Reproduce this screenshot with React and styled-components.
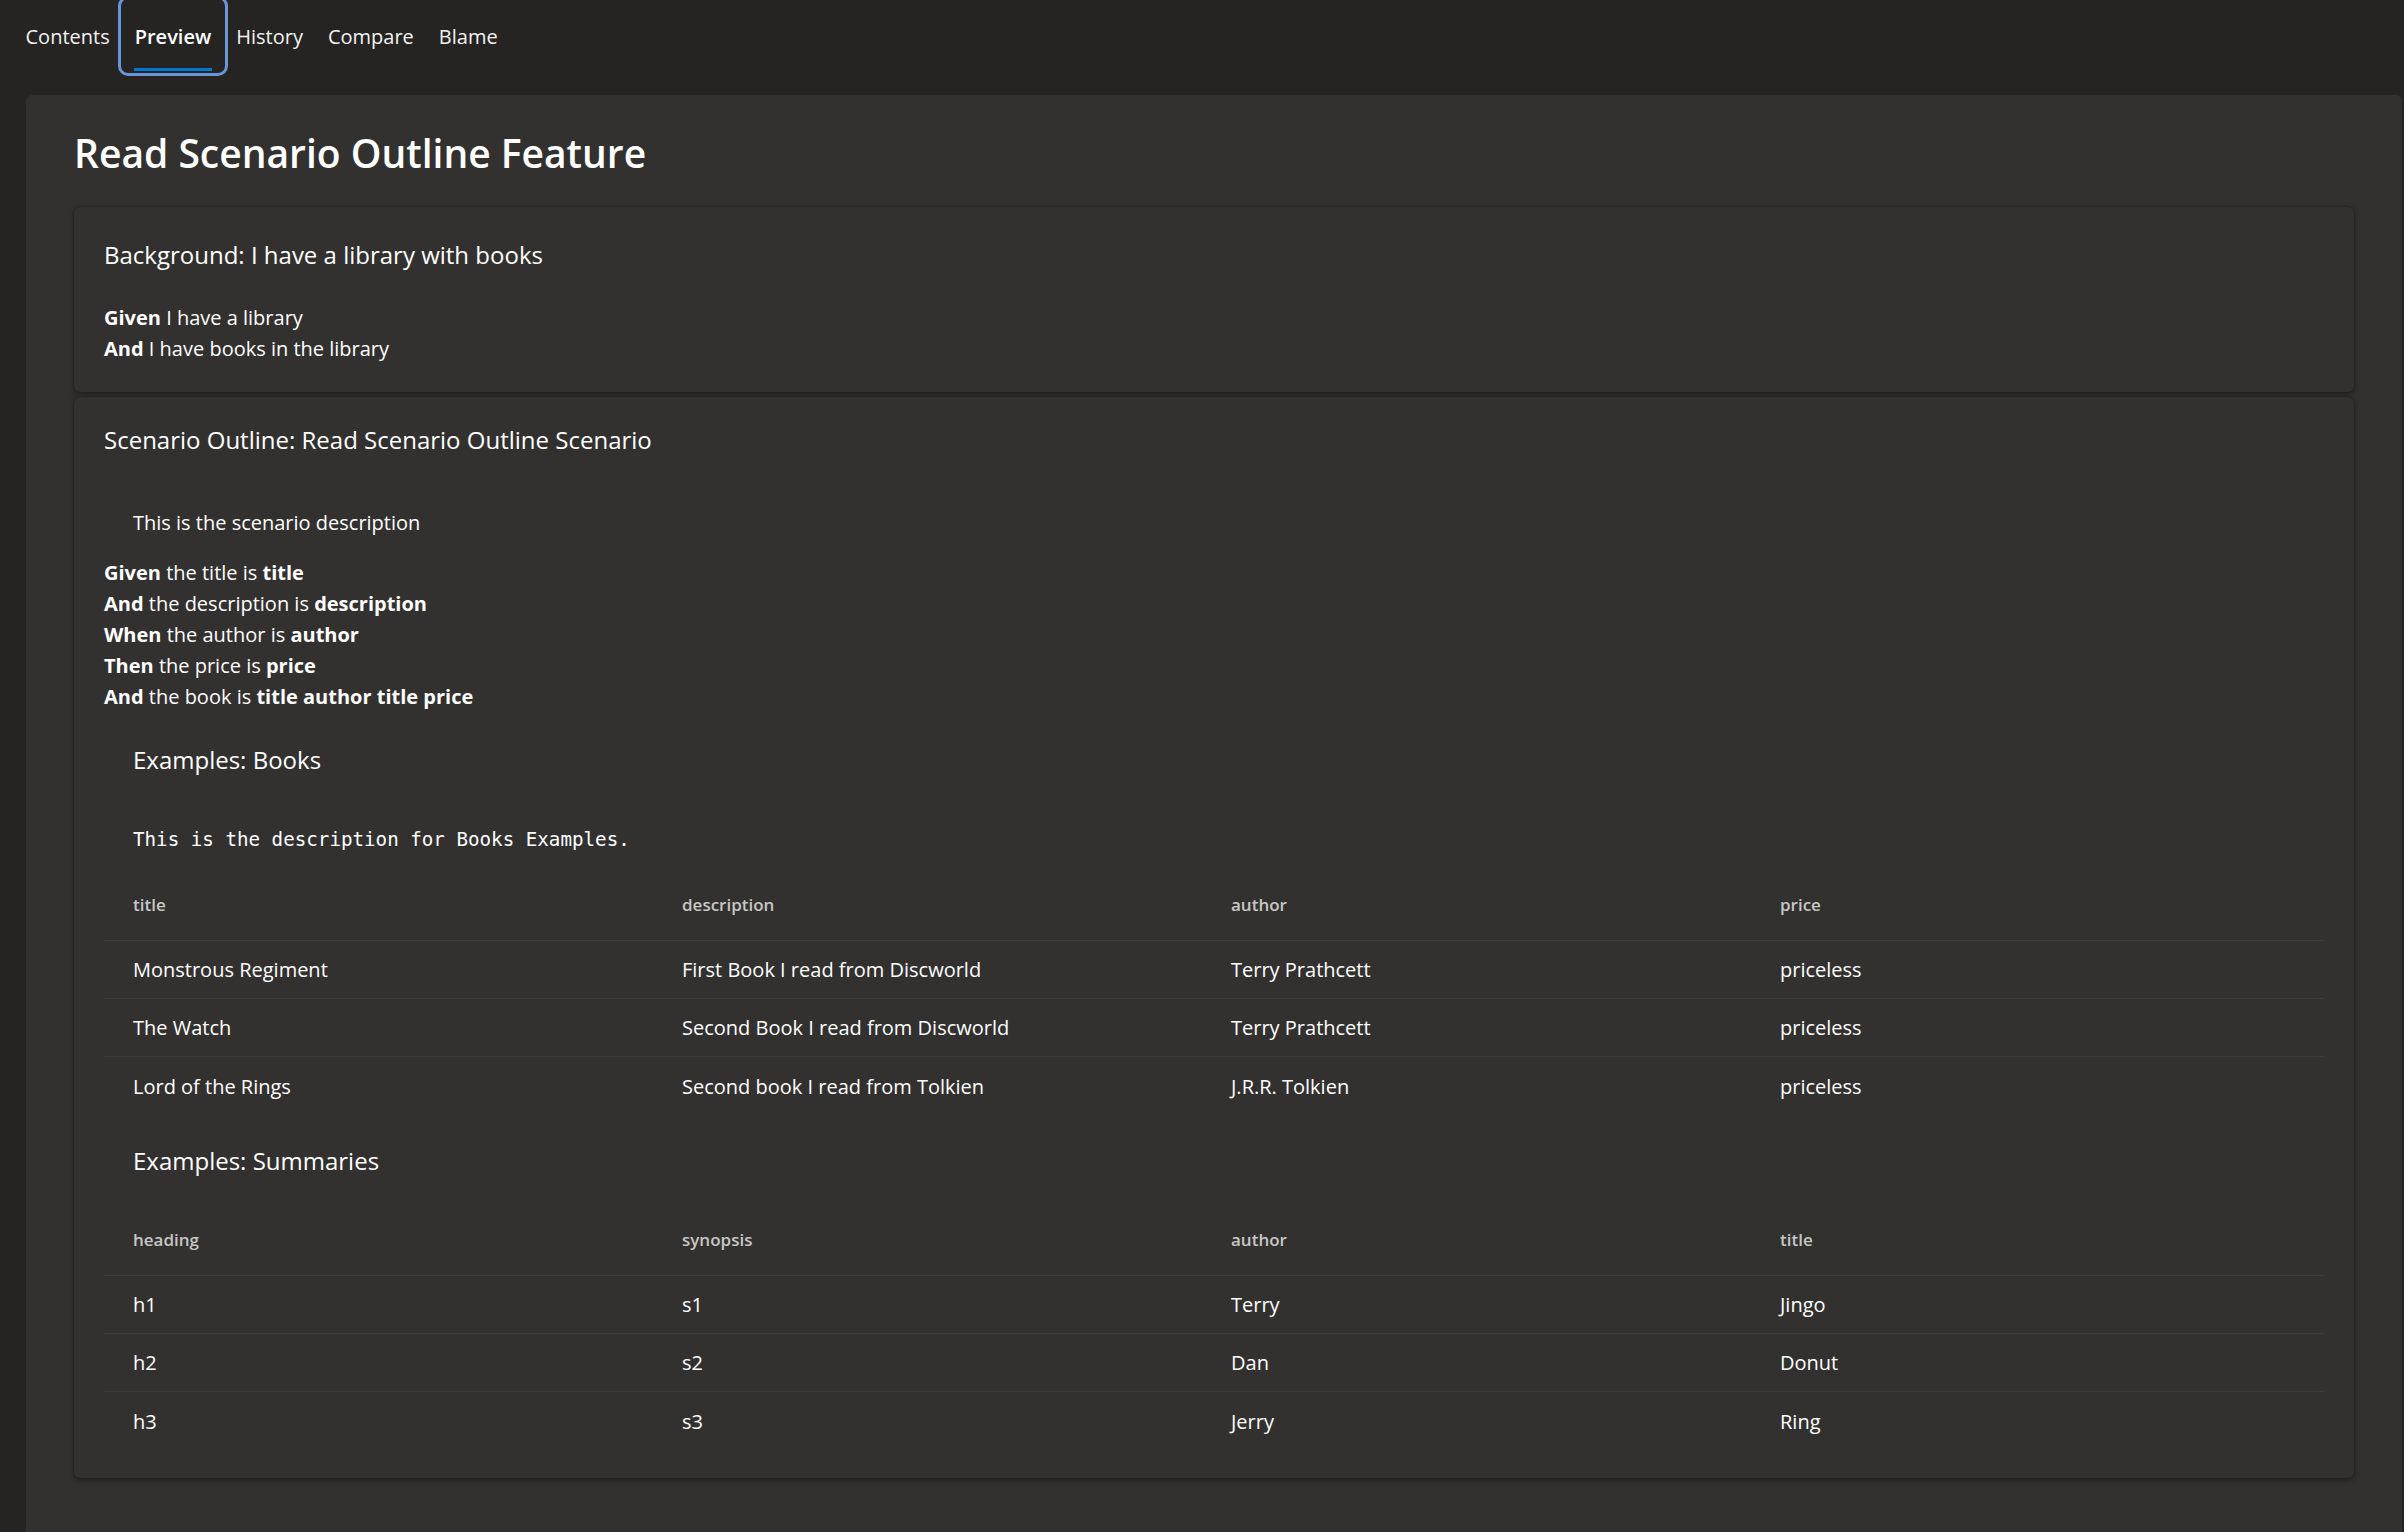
import React from "react";
import styled, { createGlobalStyle, css } from "styled-components";

const GlobalStyle = createGlobalStyle`
  html, body {
    margin: 0;
    padding: 0;
    background: #252423;
  }
  body {
    font-family: "Segoe UI", "Open Sans", "Noto Sans", sans-serif;
    color: #ffffff;
  }
  * {
    box-sizing: border-box;
  }
`;

const TabBar = styled.nav`
  display: flex;
  height: 72px;
  padding-left: 13px;
`;

const Tab = styled.div`
  position: relative;
  display: flex;
  align-items: center;
  padding: 0 12.5px;
  font-size: 20px;
  color: #f3f2f1;
  cursor: pointer;

  ${(p) =>
    p.$active &&
    css`
      font-weight: 600;
      color: #ffffff;
      border-radius: 6px;
      outline: 3px solid #6795d6;
      outline-offset: 1px;

      &::after {
        content: "";
        position: absolute;
        left: 12px;
        right: 12px;
        bottom: 1px;
        height: 3px;
        background: #0078d4;
      }
    `}
`;

const Panel = styled.main`
  margin: 23px 2px 0 26px;
  min-height: calc(100vh - 95px);
  padding: 30px 48px 53px;
  background: #323130;
  border-radius: 6px 6px 0 0;
`;

const Title = styled.h1`
  margin: 0 0 26px;
  font-size: 39px;
  font-weight: 600;
  line-height: 56px;
`;

const Card = styled.section`
  padding: ${(p) => p.$top}px 30px 28px;
  background: #323130;
  border-radius: 6px;
  box-shadow: 0 2px 6px rgba(0, 0, 0, 0.38), 0 0 2px rgba(0, 0, 0, 0.3);

  & + & {
    margin-top: 5px;
  }
`;

const CardTitle = styled.h2`
  margin: 0;
  font-size: 24px;
  font-weight: 400;
  line-height: 36px;
`;

const Description = styled.p`
  margin: 49px 0 0;
  padding-left: 29px;
  font-size: 20px;
  line-height: 31px;
`;

const Steps = styled.div`
  margin-top: ${(p) => p.$gap}px;
`;

const Step = styled.div`
  font-size: 20px;
  line-height: 31px;
`;

const Strong = styled.b`
  font-weight: 700;
`;

const ExamplesTitle = styled.h3`
  margin: ${(p) => p.$gap}px 0 0;
  padding-left: 29px;
  font-size: 24px;
  font-weight: 400;
  line-height: 36px;
`;

const ExamplesText = styled.pre`
  margin: 46px 0 0;
  padding-left: 29px;
  font-family: Consolas, "DejaVu Sans Mono", monospace;
  font-size: 19.2px;
  line-height: 31px;
`;

const Table = styled.div`
  margin-top: ${(p) => p.$gap}px;
`;

const Row = styled.div`
  display: grid;
  grid-template-columns: repeat(4, 1fr);
  align-items: center;
  padding-right: 24px;
  height: ${(p) => (p.$head ? 66 : 58)}px;
  padding-bottom: ${(p) => (p.$head ? 6 : 0)}px;
  border-bottom: 1px solid #3d3c3b;

  &:last-child {
    border-bottom: none;
  }
`;

const Cell = styled.div`
  padding-left: 29px;
  font-size: 20px;
  color: #ffffff;
`;

const HeadCell = styled(Cell)`
  font-size: 17px;
  font-weight: 600;
  color: #c8c6c4;
`;

function StepLine({ keyword, children }) {
  return (
    <Step>
      <Strong>{keyword}</Strong> {children}
    </Step>
  );
}

function ExamplesTable({ head, rows, gap }) {
  return (
    <Table $gap={gap}>
      <Row $head>
        {head.map((h) => (
          <HeadCell key={h}>{h}</HeadCell>
        ))}
      </Row>
      {rows.map((r, i) => (
        <Row key={i}>
          {r.map((c, j) => (
            <Cell key={j}>{c}</Cell>
          ))}
        </Row>
      ))}
    </Table>
  );
}

const books = [
  ["Monstrous Regiment", "First Book I read from Discworld", "Terry Prathcett", "priceless"],
  ["The Watch", "Second Book I read from Discworld", "Terry Prathcett", "priceless"],
  ["Lord of the Rings", "Second book I read from Tolkien", "J.R.R. Tolkien", "priceless"],
];

const summaries = [
  ["h1", "s1", "Terry", "Jingo"],
  ["h2", "s2", "Dan", "Donut"],
  ["h3", "s3", "Jerry", "Ring"],
];

export default function App() {
  return (
    <>
      <GlobalStyle />
      <TabBar>
        <Tab>Contents</Tab>
        <Tab $active>Preview</Tab>
        <Tab>History</Tab>
        <Tab>Compare</Tab>
        <Tab>Blame</Tab>
      </TabBar>

      <Panel>
        <Title>Read Scenario Outline Feature</Title>

        <Card $top={30}>
          <CardTitle>Background: I have a library with books</CardTitle>
          <Steps $gap={29}>
            <StepLine keyword="Given">I have a library</StepLine>
            <StepLine keyword="And">I have books in the library</StepLine>
          </Steps>
        </Card>

        <Card $top={25}>
          <CardTitle>Scenario Outline: Read Scenario Outline Scenario</CardTitle>
          <Description>This is the scenario description</Description>
          <Steps $gap={19}>
            <StepLine keyword="Given">
              the title is <Strong>title</Strong>
            </StepLine>
            <StepLine keyword="And">
              the description is <Strong>description</Strong>
            </StepLine>
            <StepLine keyword="When">
              the author is <Strong>author</Strong>
            </StepLine>
            <StepLine keyword="Then">
              the price is <Strong>price</Strong>
            </StepLine>
            <StepLine keyword="And">
              the book is <Strong>title author title price</Strong>
            </StepLine>
          </Steps>

          <ExamplesTitle $gap={30}>Examples: Books</ExamplesTitle>
          <ExamplesText>This is the description for Books Examples.</ExamplesText>
          <ExamplesTable
            gap={20}
            head={["title", "description", "author", "price"]}
            rows={books}
          />

          <ExamplesTitle $gap={28}>Examples: Summaries</ExamplesTitle>
          <ExamplesTable
            gap={31}
            head={["heading", "synopsis", "author", "title"]}
            rows={summaries}
          />
        </Card>
      </Panel>
    </>
  );
}
